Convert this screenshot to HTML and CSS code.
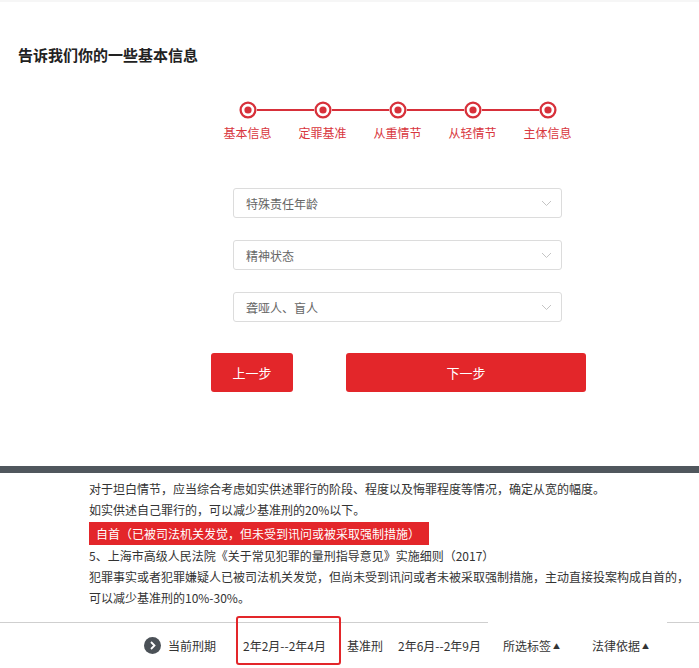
FILE: index.html
```html
<!DOCTYPE html>
<html lang="zh-CN">
<head>
<meta charset="utf-8">
<title>基本信息</title>
<link rel="stylesheet" href="styles.css">
</head>
<body>
<div class="page">
  <h1 class="title">告诉我们你的一些基本信息</h1>

  <div class="column">
    <div class="steps">
      <div class="step first">
        <div class="track"><span class="seg"></span><svg class="dot" width="18" height="18" viewBox="0 0 18 18"><circle cx="9" cy="9" r="7.4" fill="#fff" stroke="#d7303a" stroke-width="2.3"/><circle cx="9" cy="9" r="3.6" fill="#d7303a"/></svg><span class="seg"></span></div>
        <div class="label">基本信息</div>
      </div>
      <div class="step">
        <div class="track"><span class="seg"></span><svg class="dot" width="18" height="18" viewBox="0 0 18 18"><circle cx="9" cy="9" r="7.4" fill="#fff" stroke="#d7303a" stroke-width="2.3"/><circle cx="9" cy="9" r="3.6" fill="#d7303a"/></svg><span class="seg"></span></div>
        <div class="label">定罪基准</div>
      </div>
      <div class="step">
        <div class="track"><span class="seg"></span><svg class="dot" width="18" height="18" viewBox="0 0 18 18"><circle cx="9" cy="9" r="7.4" fill="#fff" stroke="#d7303a" stroke-width="2.3"/><circle cx="9" cy="9" r="3.6" fill="#d7303a"/></svg><span class="seg"></span></div>
        <div class="label">从重情节</div>
      </div>
      <div class="step">
        <div class="track"><span class="seg"></span><svg class="dot" width="18" height="18" viewBox="0 0 18 18"><circle cx="9" cy="9" r="7.4" fill="#fff" stroke="#d7303a" stroke-width="2.3"/><circle cx="9" cy="9" r="3.6" fill="#d7303a"/></svg><span class="seg"></span></div>
        <div class="label">从轻情节</div>
      </div>
      <div class="step last">
        <div class="track"><span class="seg"></span><svg class="dot" width="18" height="18" viewBox="0 0 18 18"><circle cx="9" cy="9" r="7.4" fill="#fff" stroke="#d7303a" stroke-width="2.3"/><circle cx="9" cy="9" r="3.6" fill="#d7303a"/></svg><span class="seg"></span></div>
        <div class="label">主体信息</div>
      </div>
    </div>

    <div class="fields">
      <div class="select"><span>特殊责任年龄</span><svg width="11" height="7" viewBox="0 0 11 7"><path d="M1 1l4.5 4.5L10 1" fill="none" stroke="#c4c4c4" stroke-width="1"/></svg></div>
      <div class="select"><span>精神状态</span><svg width="11" height="7" viewBox="0 0 11 7"><path d="M1 1l4.5 4.5L10 1" fill="none" stroke="#c4c4c4" stroke-width="1"/></svg></div>
      <div class="select"><span>聋哑人、盲人</span><svg width="11" height="7" viewBox="0 0 11 7"><path d="M1 1l4.5 4.5L10 1" fill="none" stroke="#c4c4c4" stroke-width="1"/></svg></div>
    </div>

    <div class="buttons">
      <button class="btn prev">上一步</button>
      <button class="btn next">下一步</button>
    </div>
  </div>

  <div class="band"></div>

  <div class="notes">
    <p>对于坦白情节，应当综合考虑如实供述罪行的阶段、程度以及悔罪程度等情况，确定从宽的幅度。</p>
    <p>如实供述自己罪行的，可以减少基准刑的20%以下。</p>
    <div class="tag">自首（已被司法机关发觉，但未受到讯问或被采取强制措施）</div>
    <p>5、上海市高级人民法院《关于常见犯罪的量刑指导意见》实施细则（2017）</p>
    <p>犯罪事实或者犯罪嫌疑人已被司法机关发觉，但尚未受到讯问或者未被采取强制措施，主动直接投案构成自首的，</p>
    <p>可以减少基准刑的10%-30%。</p>
  </div>

  <div class="bar">
    <div class="bar-left">
      <svg class="go" width="17" height="17" viewBox="0 0 17 17"><circle cx="8.5" cy="8.5" r="8.5" fill="#4b5157"/><path d="M7 5l3.5 3.5L7 12" fill="none" stroke="#fff" stroke-width="1.8"/></svg>
      <span class="cur">当前刑期</span>
      <span class="range hl">2年2月--2年4月</span>
      <span class="base">基准刑</span>
      <span class="range2">2年6月--2年9月</span>
    </div>
    <div class="bar-mid">
      <span class="drop">所选标签<i>▲</i></span>
      <span class="drop law">法律依据<i>▲</i></span>
    </div>
    <div class="bar-right"></div>
  </div>
</div>
</body>
</html>
```

FILE: styles.css
```css
* { box-sizing: border-box; }
html, body { margin: 0; padding: 0; background: #fff; }
body {
  font-family: "Noto Sans CJK SC", "Noto Sans", sans-serif;
  color: #333;
  width: 699px;
  height: 668px;
  overflow: hidden;
}
.page {
  border-top: 2px solid #f6f6f6;
}
.title {
  margin: 43px 0 0 18px;
  font-size: 15px;
  line-height: 20px;
  font-weight: bold;
  color: #222;
}
.column {
  margin-left: 210px;
  width: 376px;
}
.steps {
  display: flex;
  margin-top: 36px;
}
.step {
  width: 75px;
  display: flex;
  flex-direction: column;
  align-items: center;
}
.track {
  width: 100%;
  display: flex;
  align-items: center;
  height: 18px;
}
.seg {
  flex: 1;
  height: 1.5px;
  background: #d7303a;
}
.first .seg:first-child, .last .seg:last-child { background: transparent; }
.dot { display: block; flex: none; }
.label {
  margin-top: 6px;
  font-size: 12px;
  line-height: 16px;
  color: #d8363d;
}
.fields {
  margin: 47px 0 0 23px;
  width: 329px;
  display: flex;
  flex-direction: column;
  gap: 22px;
}
.select {
  height: 30px;
  border: 1px solid #dcdcdc;
  border-radius: 3px;
  display: flex;
  align-items: center;
  justify-content: space-between;
  padding: 0 9px 0 12px;
  font-size: 12px;
  color: #666;
}
.select svg { display: block; }
.buttons {
  margin-top: 31px;
  display: flex;
  justify-content: space-between;
  padding-left: 1px;
}
.btn {
  height: 39px;
  border: 0;
  border-radius: 3px;
  background: #e3262a;
  color: #fff;
  font-family: inherit;
  font-size: 13px;
  padding: 0;
}
.prev { width: 82px; }
.next { width: 240px; }
.band {
  margin-top: 74px;
  height: 7px;
  background: #50575d;
}
.notes {
  padding: 5px 10px 0 89px;
  font-size: 12px;
  line-height: 21px;
  color: #333;
}
.notes p { margin: 0; white-space: nowrap; }
.tag {
  display: inline-block;
  margin: 2px 0 0;
  height: 23px;
  line-height: 23px;
  padding: 0 9px 0 7px;
  background: #e3262a;
  color: #fff;
  font-size: 12px;
}
.bar {
  margin-top: 14px;
  display: flex;
  height: 46px;
}
.bar-left {
  width: 488px;
  border-top: 1px solid #cfcfcf;
  display: flex;
  align-items: center;
  padding-left: 144px;
  font-size: 12px;
  color: #333;
}
.go { display: block; flex: none; }
.cur { margin-left: 7px; }
.range { margin-left: 27px; position: relative; }
.hl::after {
  content: "";
  position: absolute;
  left: -7px;
  right: -15px;
  top: -21px;
  bottom: -11px;
  border: 2px solid #e3262a;
  border-radius: 3px;
}
.base { margin-left: 21px; }
.range2 { margin-left: 15px; }
.bar-mid {
  width: 179px;
  display: flex;
  align-items: center;
  padding-left: 15px;
  font-size: 12px;
  color: #333;
}
.drop i {
  font-style: normal;
  font-size: 7px;
  margin-left: 2px;
  vertical-align: 2px;
}
.law { margin-left: 32px; }
.bar-right {
  flex: 1;
  border-top: 1px solid #cfcfcf;
}
```
